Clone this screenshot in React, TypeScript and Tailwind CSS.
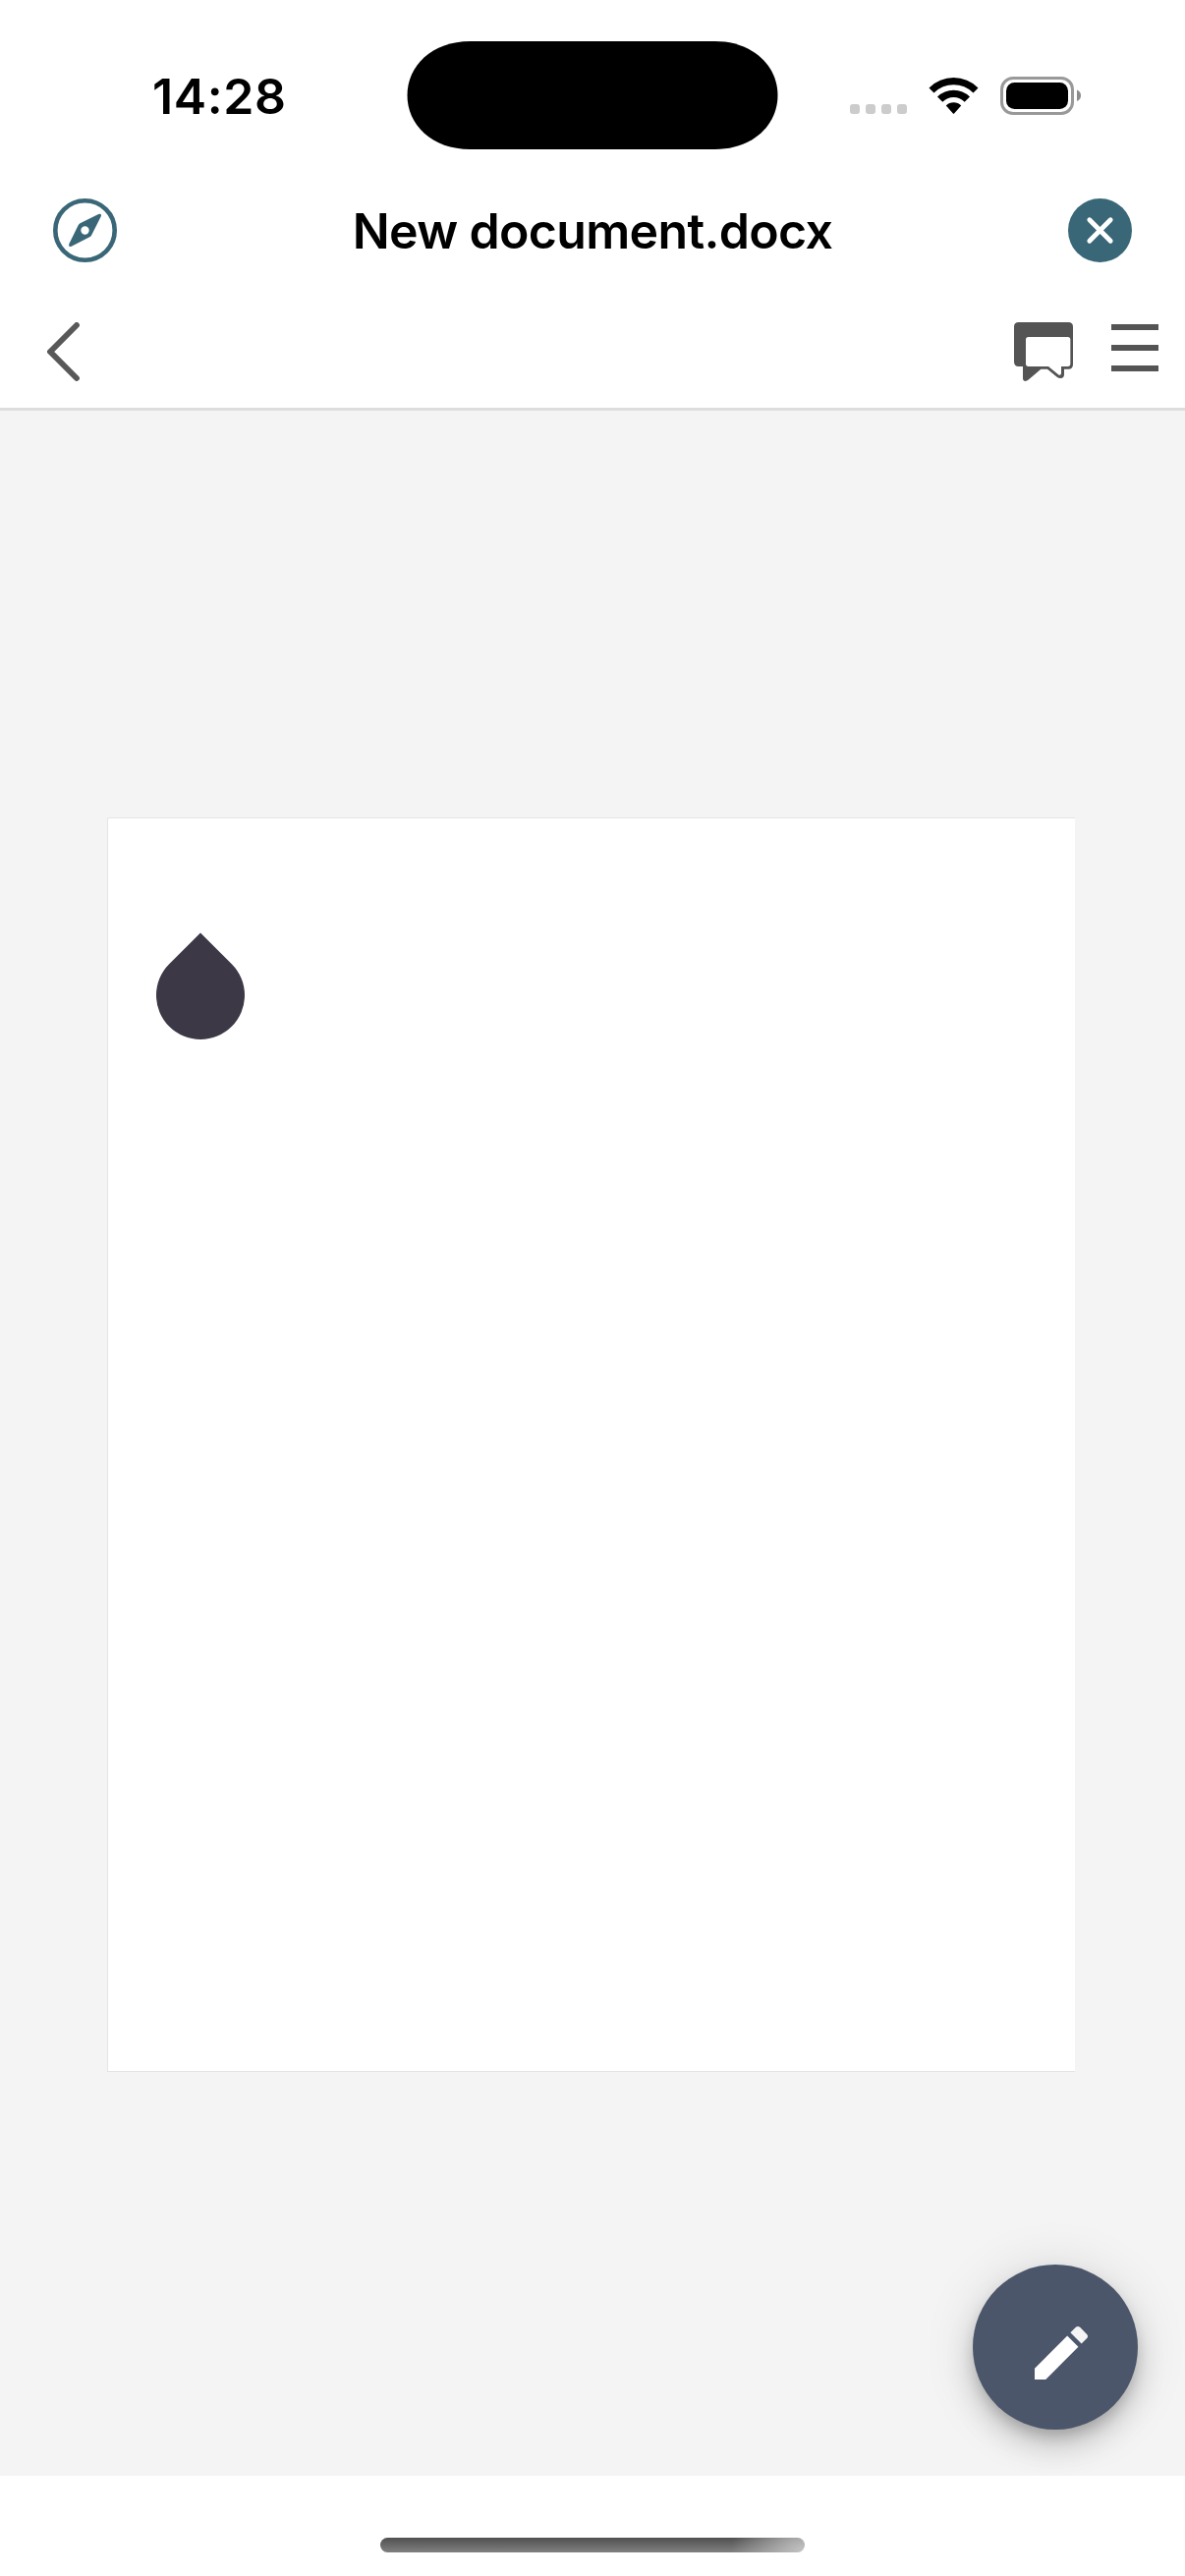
function StatusBar() {
  return (
    <div className="flex h-[184px] shrink-0 items-start">
      <div className="mt-[66px] ml-[155px] w-[259px] text-[50px] leading-[64px] font-semibold tracking-[0.6px]">14:28</div>
      <svg className="mt-[42px] h-[110px] w-[378px]" viewBox="0 0 378 110">
        <path d="M64.500 0H313.500C352.500 0 377.500 25 377.500 55S352.500 110 313.500 110H64.500C25.500 110 .5 85 .5 55S25.500 0 64.500 0Z" />
      </svg>
      <div className="mt-[106px] ml-[73px] flex gap-[6px]">
        {[0, 1, 2, 3].map((dot) => (
          <span key={dot} className="size-[10px] rounded-[3px] bg-[#cccccc]" />
        ))}
      </div>
      <svg className="mt-[79px] ml-[22px] h-[37px] w-[51px]" viewBox="0 0 51 37">
        <path d="M.5 10.5Q11 0 25.500 0T50.500 10.500L45.500 15.500Q37 7.300 25.500 7.300T5.500 15.500Z" />
        <path d="M9 19.500Q16 12.700 25.500 12.700T42 19.500L36.700 24.700Q32 20 25.500 20T14.300 24.700Z" />
        <path d="M17.800 28.500Q21 25.300 25.500 25.300T33.200 28.500L26.300 36.300Q25.500 37.300 24.700 36.300Z" />
      </svg>
      <svg className="mt-[78px] ml-[22px] h-[39px] w-[83px]" viewBox="0 0 83 39">
        <rect x="1.5" y="1.5" width="72" height="36" rx="11.5" fill="none" stroke="#999999" strokeWidth="3" />
        <rect x="6" y="6" width="63" height="27" rx="8.500" />
        <path d="M78 13.500Q82 15 82 19.200T78 25Z" fill="#8c8c8c" />
      </svg>
    </div>
  );
}

function TitleBar() {
  return (
    <div className="flex h-[101px] shrink-0 items-center justify-between px-[54px]">
      <svg className="size-[65px]" viewBox="0 0 65 65">
        <circle cx="32.500" cy="32.500" r="30.200" fill="none" stroke="#3a6777" strokeWidth="4.600" />
        <path
          fill="#3a6777"
          fillRule="evenodd"
          d="M27.500 25.300L46.200 16Q49.800 14.800 48.800 18.200L39.200 37.200Q38.600 38.600 37.200 39.300L18.700 48.800Q15.500 50 16.200 46.600L25.500 27.600Q26.200 26 27.500 25.300ZM32.500 28.300A4.200 4.200 0 1 0 32.500 36.700A4.200 4.200 0 1 0 32.500 28.300Z"
        />
      </svg>
      <h1 className="text-[50px] leading-[60px] font-semibold tracking-[-0.65px] whitespace-nowrap">New document.docx</h1>
      <svg className="size-[65px]" viewBox="0 0 65 65">
        <circle cx="32.500" cy="32.500" r="32.500" fill="#3a6777" />
        <path d="M21.800 21.800L43.200 43.200M43.200 21.800L21.800 43.200" stroke="#fff" strokeWidth="4.800" strokeLinecap="round" />
      </svg>
    </div>
  );
}

function Toolbar() {
  return (
    <div className="flex h-[133px] shrink-0 items-start border-b-[3px] border-[#dddddd] pt-[43px] pr-[27px] pl-[48px]">
      <svg className="h-[60px] w-[33px]" viewBox="0 0 33 60">
        <path d="M30 3L3.200 30L30 57" fill="none" stroke="#585858" strokeWidth="5.800" strokeLinecap="round" />
      </svg>
      <svg className="ml-auto size-[60px]" viewBox="0 0 180 180">
        <path
          fill="#545454"
          d="M14 0H166Q180 0 180 14V128Q180 143 166 143H153V160Q153 171 142 171Q136 171 131 167L102 143H82L45 175Q40 180 33 180Q27 180 27 172V135H14Q0 135 0 121V14Q0 0 14 0Z"
        />
        <path
          fill="#fff"
          d="M44 45H164Q172 45 172 53V127Q172 135 164 135H144V155Q144 163 137 161L105 135H44Q36 135 36 127V53Q36 45 44 45Z"
        />
      </svg>
      <div className="mt-[2px] ml-[39px] flex w-[48px] flex-col gap-[15px]">
        <span className="h-[6px] bg-[#545454]" />
        <span className="h-[6px] bg-[#545454]" />
        <span className="h-[6px] bg-[#545454]" />
      </div>
    </div>
  );
}

export default function App() {
  return (
    <div className="flex h-[2622px] w-[1206px] flex-col overflow-hidden bg-white font-['Inter',sans-serif] text-black">
      <StatusBar />
      <TitleBar />
      <Toolbar />
      <main className="relative h-[2102px] shrink-0 overflow-hidden bg-[#f4f4f4] pt-[414px] pl-[109px]">
        <div className="h-[1277px] w-[985px] rounded-tl-[2px] border-t border-b border-l border-[#e4e4e4] bg-white pt-[116px] pl-[49px]">
          <svg className="h-[110px] w-[90px]" viewBox="0 0 90 110">
            <path d="M45 .4L76.800 32.200A45 45 0 1 1 13.200 32.200Z" fill="#3d3846" />
          </svg>
        </div>
        <button
          aria-label="Edit"
          className="absolute right-[48px] bottom-[47px] flex size-[168px] items-center justify-center rounded-full bg-[#4c566a] pt-[12px] pl-[12px] shadow-[0_9px_15px_-3px_rgba(0,0,0,0.2),0_18px_30px_rgba(0,0,0,0.14),0_3px_54px_rgba(0,0,0,0.12)]"
        >
          <svg className="size-[72px]" viewBox="0 0 24 24" fill="#fff">
            <path d="M3 17.25V21h3.750L17.810 9.940l-3.750-3.750L3 17.250z" />
            <path fill="#f4f4f5" d="M20.710 7.040c.39-.39.39-1.020 0-1.410l-2.340-2.340c-.39-.39-1.020-.39-1.410 0l-1.830 1.830 3.750 3.750 1.830-1.830z" />
          </svg>
        </button>
      </main>
      <footer className="flex h-[102px] shrink-0 justify-center pt-[63px]">
        <div className="h-[15px] w-[432px] rounded-full bg-[radial-gradient(ellipse_75px_60px_at_100%_100%,#c4c4c4,transparent),linear-gradient(to_bottom,#505050,#808080)]" />
      </footer>
    </div>
  );
}
